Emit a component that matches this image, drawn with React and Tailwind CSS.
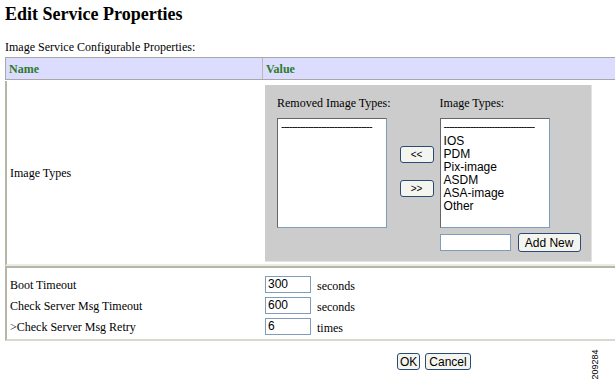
export default function App() {
  const serif = { fontFamily: '"Liberation Serif", "Times New Roman", serif' };
  const sans = { fontFamily: '"Liberation Sans", Arial, sans-serif' };
  const items = ["IOS", "PDM", "Pix-image", "ASDM", "ASA-image", "Other"];
  return (
    <div className="relative w-[615px] h-[382px] bg-white overflow-hidden text-black" style={serif}>
      <h1 className="ml-[5px] pt-[4px] text-[18px] leading-[20px] font-bold" style={serif}>Edit Service Properties</h1>
      <div className="ml-[5px] mt-[16px] text-[12px] leading-[14px]">Image Service Configurable Properties:</div>

      <div className="ml-[5px] mt-[3px] w-[610px]">
        {/* header */}
        <div className="flex h-[23px] bg-[#dcdcff] border-t border-b border-[#a8a8a8] border-l">
          <div className="w-[257px] border-r border-[#b8b8b8] flex items-center pl-[3px] text-[12px] font-bold text-[#2b7a2b]">Name</div>
          <div className="flex-1 flex items-center pl-[3px] text-[12px] font-bold text-[#2b7a2b]">Value</div>
        </div>
        {/* Image types row */}
        <div className="flex mt-[1px] h-[185px] border-l-2 border-[#b5b5a8] border-b-2 border-b-[#ecece4]">
          <div className="w-[258px] flex items-center pl-[3px] text-[12px]">Image Types</div>
          <div className="pt-[4px]">
            <div className="w-[327px] h-[177px] bg-[#cccccc] border-r border-b border-[#e4e4dc] flex flex-col">
              <div className="flex pl-[12px] pt-[11px]">
                <div className="flex flex-col">
                  <div className="text-[12px] leading-[14px] h-[22px]">Removed Image Types:</div>
                  <div className="w-[110px] h-[110px] bg-white border border-[#7f9db9] border-t-[#666] border-l-[#666] pl-[3px]" style={sans}>
                    <div className="tracking-[-1px] text-[11px] leading-[14px] h-[14px]">----------------------------------</div>
                  </div>
                </div>
                <div className="flex flex-col ml-[9px] pt-[50px] gap-[17px]">
                  <button className="w-[34px] h-[17px] rounded-[3px] border border-[#2b4a7a] bg-[#f5f5f0] text-[10px] leading-[10px]" style={sans}>&lt;&lt;</button>
                  <button className="w-[34px] h-[17px] rounded-[3px] border border-[#2b4a7a] bg-[#f5f5f0] text-[10px] leading-[10px]" style={sans}>&gt;&gt;</button>
                </div>
                <div className="flex flex-col ml-[6px]">
                  <div className="text-[12px] leading-[14px] h-[22px]">Image Types:</div>
                  <div className="w-[110px] h-[110px] bg-white border border-[#7f9db9] border-t-[#666] border-l-[#666] pl-[3px] text-[12px] leading-[13px]" style={sans}>
                    <div className="tracking-[-1px] text-[11px] leading-[14px] h-[16px]">----------------------------------</div>
                    {items.map((t) => (
                      <div key={t}>{t}</div>
                    ))}
                  </div>
                  <div className="flex items-center mt-[5px]">
                    <div className="w-[71px] h-[17px] bg-white border border-[#7f9db9]"></div>
                    <button className="ml-[7px] w-[63px] h-[19px] rounded-[3px] border border-[#2b4a7a] bg-[#f5f5f0] text-[12px] leading-[12px]" style={sans}>Add New</button>
                  </div>
                </div>
              </div>
            </div>
          </div>
        </div>
        {/* numeric rows */}
        <div className="border-t-2 border-t-[#b5b5a8] border-l-2 border-l-[#b5b5a8] border-b-2 border-b-[#d8d8d0] pt-[8px] pb-[4px] flex flex-col gap-[4px]">
          {[
            ["Boot Timeout", "300", "seconds"],
            ["Check Server Msg Timeout", "600", "seconds"],
            [">Check Server Msg Retry", "6", "times"],
          ].map(([n, v, u]) => (
            <div key={n} className="flex items-center h-[17px]">
              <div className="w-[258px] pl-[3px] text-[12px] leading-[14px]">{n}</div>
              <div className="w-[46px] h-[17px] border border-[#7f9db9] pl-[2px] text-[12px] leading-[15px]" style={sans}>{v}</div>
              <div className="ml-[6px] text-[12px] leading-[14px] pt-[3px]">{u}</div>
            </div>
          ))}
        </div>
      </div>

      <div className="flex mt-[12px] pl-[397px] gap-[5px]" style={sans}>
        <button className="h-[17px] px-[2px] rounded-[3px] border border-[#2b4a7a] bg-[#f5f5f0] text-[12px] leading-[12px]">OK</button>
        <button className="h-[17px] px-[3px] rounded-[3px] border border-[#2b4a7a] bg-[#f5f5f0] text-[12px] leading-[12px]">Cancel</button>
      </div>
      <div className="absolute left-[588px] top-[350px] w-[14px] h-[28px] flex items-center justify-center">
        <div className="-rotate-90 text-[9px] leading-[9px] whitespace-nowrap" style={sans}>209284</div>
      </div>
    </div>
  );
}
